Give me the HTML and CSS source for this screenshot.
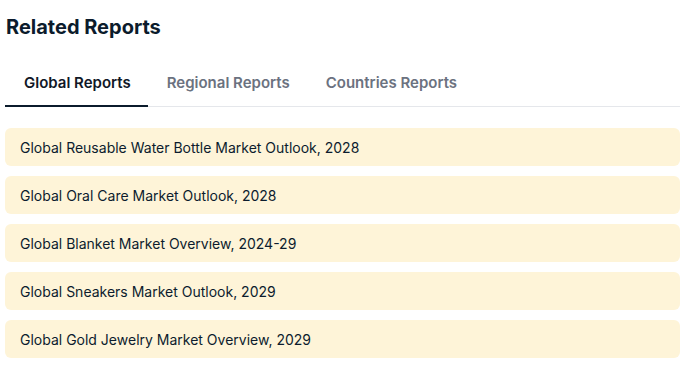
FILE: index.html
```html
<!DOCTYPE html>
<html>

<head>
<link rel="stylesheet" href="styles.css">
</head>

<body>
  <div class="related">
    <h2 class="title">Related Reports</h2>

    <div class="tabs">
      <span class="tab active">Global Reports</span>
      <span class="tab">Regional Reports</span>
      <span class="tab">Countries Reports</span>
    </div>

    <ul class="reportlist">
      <li>Global Reusable Water Bottle Market Outlook, 2028</li>
      <li>Global Oral Care Market Outlook, 2028</li>
      <li>Global Blanket Market Overview, 2024-29</li>
      <li>Global Sneakers Market Outlook, 2029</li>
      <li>Global Gold Jewelry Market Overview, 2029</li>
    </ul>
  </div>
</body>
</html>
```

FILE: styles.css
```css
* {
    box-sizing: border-box;
  }

  body {
    margin: 0;
    background: #ffffff;
    font-family: Inter, "Noto Sans", sans-serif;
    color: #0c1c2e;
  }

  /* Wrapper for the whole block */
  .related {
    padding: 13px 11px 0 5px;
  }

  .title {
    margin: 0 0 0 1px;
    font-size: 20px;
    font-weight: 700;
    line-height: 28px;
    color: #0b1b2c;
  }

  /* Tab row with light rule below */
  .tabs {
    display: flex;
    margin-top: 23px;
    border-bottom: 1px solid #e5e7eb;
  }

  .tab {
    padding: 9px 17px 12px 19px;
    font-size: 15px;
    font-weight: 600;
    line-height: 20px;
    color: #6b7280;
    border-bottom: 2px solid transparent;
    margin-bottom: -1px;
  }

  .tab.active {
    color: #111827;
    border-bottom-color: #0b1b2c;
  }

  /* List of reports */
  .reportlist {
    list-style: none;
    margin: 21px 0 0 0;
    padding: 0;
    display: flex;
    flex-direction: column;
    gap: 10px;
  }

  .reportlist li {
    background: #fef4d8;
    border-radius: 6px;
    height: 38px;
    padding: 0 15px;
    display: flex;
    align-items: center;
    font-size: 14px;
    color: #0c1c2e;
  }
```
